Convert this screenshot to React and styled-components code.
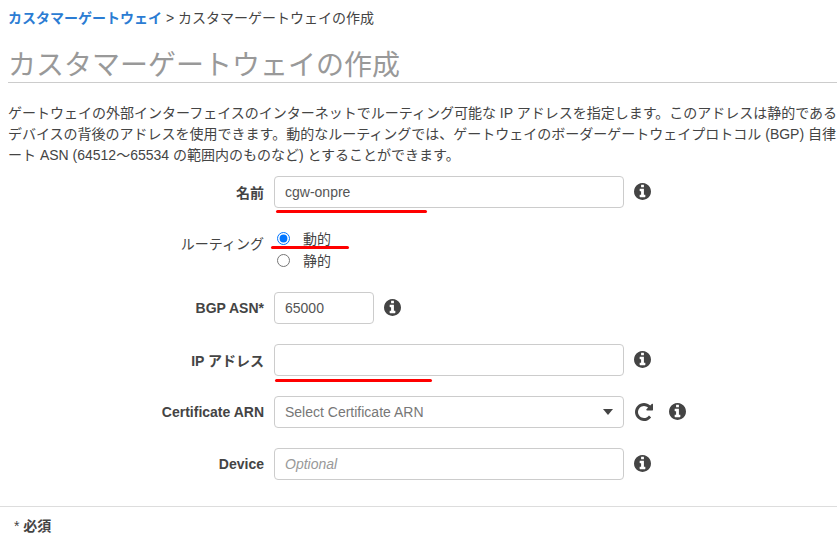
import styled, { createGlobalStyle } from 'styled-components'

const GlobalStyle = createGlobalStyle`
  html, body {
    margin: 0;
    padding: 0;
    background: #ffffff;
    overflow: hidden;
  }
  body {
    font-family: "Liberation Sans", "Noto Sans CJK JP", sans-serif;
    font-size: 14px;
    color: #444;
  }
`

const Page = styled.div`
  width: 837px;
  height: 558px;
  overflow: hidden;
`

const Breadcrumb = styled.nav`
  padding: 8px 0 0 8px;
  height: 21px;
  line-height: 21px;
  font-size: 14px;
  white-space: nowrap;
  a {
    color: #2b7cd3;
    font-weight: 700;
    text-decoration: none;
  }
`

const Title = styled.h1`
  display: flex;
  align-items: flex-end;
  margin: 12px 0 0 8px;
  height: 41px;
  line-height: 33px;
  font-size: 28px;
  font-weight: 400;
  color: #999;
  border-bottom: 1px solid #ccc;
  white-space: nowrap;
`

const Description = styled.p`
  margin: 20px 0 0 8px;
  line-height: 21px;
  font-size: 14px;
  color: #444;
  white-space: nowrap;
`

const Form = styled.form`
  display: flex;
  flex-direction: column;
  gap: 20px;
  margin-top: 10px;
`

const Row = styled.div`
  display: flex;
  align-items: center;
  min-height: 32px;
`

const TallRow = styled(Row)`
  align-items: flex-start;
  height: 44px;
`

const Label = styled.label`
  width: 274px;
  padding-right: 10px;
  box-sizing: border-box;
  text-align: right;
  font-size: 14px;
  font-weight: 700;
  color: #444;
  white-space: nowrap;
`

const RoutingLabel = styled(Label)`
  margin-top: 5px;
  font-weight: 400;
`

const Field = styled.div`
  position: relative;
  width: ${(props) => props.$width || 350}px;
  height: 32px;
`

const TextBox = styled.input`
  width: 100%;
  height: 100%;
  box-sizing: border-box;
  padding: 0 10px;
  border: 1px solid #ccc;
  border-radius: 4px;
  background: #fff;
  font-family: inherit;
  font-size: 14px;
  color: #555;
  outline: none;
  &::placeholder {
    color: #999;
    font-style: italic;
    opacity: 1;
  }
`

const SelectBox = styled.div`
  display: flex;
  align-items: center;
  justify-content: space-between;
  height: 100%;
  box-sizing: border-box;
  padding: 0 10px;
  border: 1px solid #ccc;
  border-radius: 4px;
  font-size: 14px;
  color: #777;
`

const Caret = styled.span`
  width: 0;
  height: 0;
  border-left: 5.5px solid transparent;
  border-right: 5.5px solid transparent;
  border-top: 6px solid #444;
`

const RadioGroup = styled.div`
  position: relative;
  display: flex;
  flex-direction: column;
  margin-top: -1px;
  padding-left: 2px;
`

const RadioOption = styled.label`
  display: flex;
  align-items: center;
  height: 22px;
  font-size: 14px;
  color: #444;
`

const RadioInput = styled.input`
  width: 13px;
  height: 13px;
  margin: 0 13px 0 1px;
  accent-color: #0075ff;
`

const Underline = styled.span`
  position: absolute;
  left: ${(props) => props.$left}px;
  top: ${(props) => props.$top}px;
  width: ${(props) => props.$width}px;
  height: 3px;
  border-radius: 2px;
  background: #f00;
`

const IconBox = styled.svg`
  display: block;
  flex: none;
  width: ${(props) => props.$size || 17}px;
  height: ${(props) => props.$size || 17}px;
  margin-top: -1px;
  margin-left: ${(props) => props.$gap || 10}px;
  fill: #444;
`

const Footer = styled.footer`
  margin-top: 26px;
  border-top: 1px solid #ddd;
  padding: 9px 14px;
  line-height: 21px;
  font-size: 14px;
  font-weight: 700;
  color: #444;
`

const Star = styled.span`
  font-weight: 400;
`

function Info({ gap }) {
  return (
    <IconBox viewBox="0 128 1536 1536" $gap={gap}>
      <path d="M1024 1376v-160q0-14-9-23t-23-9h-96v-512q0-14-9-23t-23-9h-320q-14 0-23 9t-9 23v160q0 14 9 23t23 9h96v320h-96q-14 0-23 9t-9 23v160q0 14 9 23t23 9h448q14 0 23-9t9-23zm-128-896v-160q0-14-9-23t-23-9h-192q-14 0-23 9t-9 23v160q0 14 9 23t23 9h192q14 0 23-9t9-23zm640 416q0 209-103 385.5t-279.5 279.5-385.5 103-385.5-103-279.5-279.5-103-385.5 103-385.5 279.5-279.5 385.5-103 385.5 103 279.5 279.5 103 385.5z" />
    </IconBox>
  )
}

function Refresh() {
  return (
    <IconBox viewBox="0 128 1536 1536" $size={18} $gap={11}>
      <path d="M1536 256v448q0 26-19 45t-45 19h-448q-42 0-59-40-17-39 14-69l138-138q-148-137-349-137-104 0-198.5 40.5t-163.5 109.5-109.5 163.5-40.5 198.5 40.5 198.5 109.5 163.5 163.5 109.5 198.5 40.5q119 0 225-52t179-147q7-10 23-12 15 0 25 9l137 138q9 8 9.5 20.5t-7.5 22.5q-109 132-264 204.5t-327 72.5q-156 0-298-61t-245-164-164-245-61-298 61-298 164-245 245-164 298-61q147 0 284.5 55.5t244.5 156.5l130-129q29-31 70-14 39 17 39 59z" />
    </IconBox>
  )
}

export default function App() {
  return (
    <Page>
      <GlobalStyle />
      <Breadcrumb>
        <a href="#gateways">カスタマーゲートウェイ</a> &gt; カスタマーゲートウェイの作成
      </Breadcrumb>
      <Title>カスタマーゲートウェイの作成</Title>
      <Description>
        ゲートウェイの外部インターフェイスのインターネットでルーティング可能な IP アドレスを指定します。このアドレスは静的である
        <br />
        デバイスの背後のアドレスを使用できます。動的なルーティングでは、ゲートウェイのボーダーゲートウェイプロトコル (BGP) 自律
        <br />
        ート ASN (64512～65534 の範囲内のものなど) とすることができます。
      </Description>
      <Form>
        <Row>
          <Label>名前</Label>
          <Field>
            <TextBox defaultValue="cgw-onpre" />
            <Underline $left={2} $top={34} $width={151} />
          </Field>
          <Info />
        </Row>
        <TallRow>
          <RoutingLabel>ルーティング</RoutingLabel>
          <RadioGroup>
            <RadioOption>
              <RadioInput type="radio" name="routing" defaultChecked />
              動的
            </RadioOption>
            <RadioOption>
              <RadioInput type="radio" name="routing" />
              静的
            </RadioOption>
            <Underline $left={-3} $top={19} $width={78} />
          </RadioGroup>
        </TallRow>
        <Row>
          <Label>BGP ASN*</Label>
          <Field $width={100}>
            <TextBox defaultValue="65000" />
          </Field>
          <Info />
        </Row>
        <Row>
          <Label>IP アドレス</Label>
          <Field>
            <TextBox />
            <Underline $left={1} $top={35} $width={157} />
          </Field>
          <Info />
        </Row>
        <Row>
          <Label>Certificate ARN</Label>
          <Field>
            <SelectBox>
              Select Certificate ARN
              <Caret />
            </SelectBox>
          </Field>
          <Refresh />
          <Info gap={16} />
        </Row>
        <Row>
          <Label>Device</Label>
          <Field>
            <TextBox placeholder="Optional" />
          </Field>
          <Info />
        </Row>
      </Form>
      <Footer>
        <Star>*</Star> 必須
      </Footer>
    </Page>
  )
}
